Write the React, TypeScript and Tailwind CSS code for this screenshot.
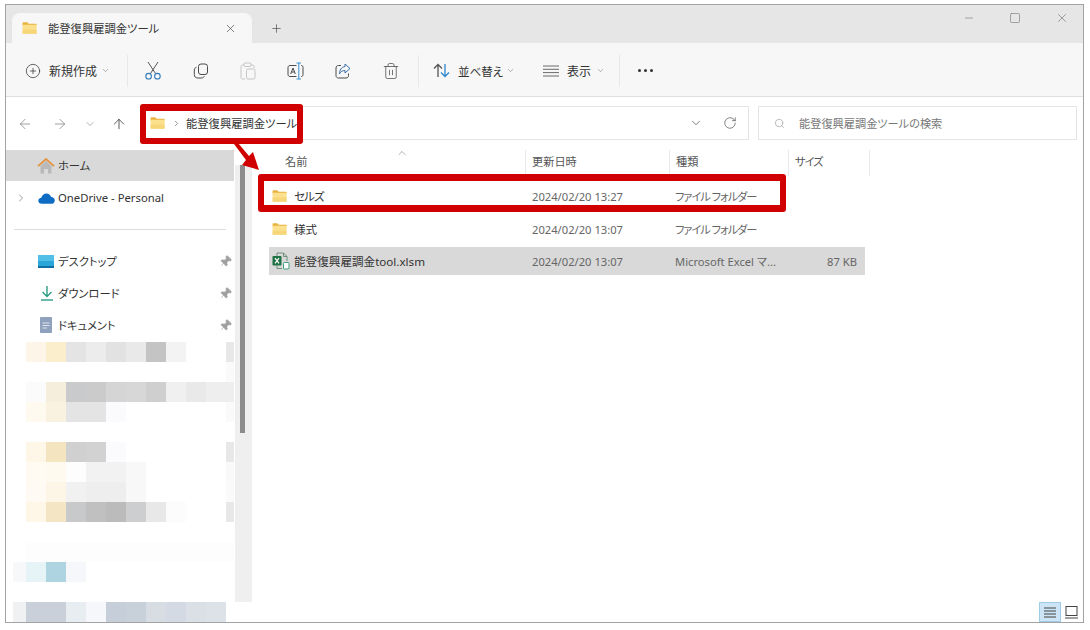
import React from "react";
import { ArrowLeft, ArrowRight, ArrowUp, ChevronDown, ChevronRight, ChevronUp, CirclePlus, Minus, Pin, Plus, RotateCw, Search, Square, Trash2, X } from "lucide-react";

function Folder({ className = "" }: { className?: string }) {
  return (
    <svg viewBox="0 0 16 13" className={className}>
      <path d="M0.5 1.2C0.5 0.6 1 0.2 1.5 0.2H5.5L7.2 1.8H15C15.4 1.8 15.7 2.1 15.7 2.5V4H0.5Z" fill="#e8b33f" />
      <rect x="0.5" y="3" width="15.2" height="9.6" rx="0.6" fill="#fbe08e" />
      <rect x="0.5" y="8" width="15.2" height="4.6" rx="0.6" fill="#f7d679" />
    </svg>
  );
}

function Excel({ className = "" }: { className?: string }) {
  return (
    <svg viewBox="0 0 18 18" className={className}>
      <path d="M5 1H11.5L15 4.5V9" fill="none" stroke="#6f8f7d" strokeWidth="1" />
      <path d="M11.5 1V4.5H15" fill="none" stroke="#6f8f7d" strokeWidth="1" />
      <path d="M5 1V4M5 14V16.5H10" fill="none" stroke="#6f8f7d" strokeWidth="1" />
      <rect x="0.5" y="4" width="9" height="9.5" rx="0.8" fill="#1e7145" />
      <path d="M3 6.2L7 11.4M7 6.2L3 11.4" stroke="#fff" strokeWidth="1.2" />
      <rect x="11.5" y="10.5" width="5.5" height="6.5" rx="1" fill="#fff" stroke="#3f9c7c" strokeWidth="1" />
    </svg>
  );
}

function HomeIcon() {
  return (
    <svg viewBox="0 0 18 16" className="w-[18px] h-4 shrink-0 -ml-px">
      <path d="M3.5 8V15.5H7V11H11V15.5H14.5V8L9 3Z" fill="#b9b9b9" />
      <path d="M1 8.2L9 1L17 8.2" fill="none" stroke="#e3913a" strokeWidth="1.7" />
    </svg>
  );
}

function Cloud() {
  return (
    <svg viewBox="0 0 17 11" className="w-[17px] h-[11px] shrink-0">
      <path d="M4 10.8C1.8 10.8 0.3 9.5 0.3 7.7C0.3 6 1.6 4.8 3.3 4.7C4 2.3 6 0.6 8.4 0.6C10.6 0.6 12.4 2 13.1 4C15.2 4 16.8 5.4 16.8 7.4C16.8 9.4 15.2 10.8 13.2 10.8Z" fill="#0f6cc4" />
    </svg>
  );
}

function DesktopIcon() {
  return (
    <svg viewBox="0 0 16 13" className="w-4 h-[13px] shrink-0">
      <rect width="16" height="13" fill="#2aa7d8" />
      <rect width="16" height="6" fill="#52c0e6" />
      <rect y="11" width="16" height="2" fill="#0f6ea3" />
    </svg>
  );
}

function DownloadIcon() {
  return (
    <svg viewBox="0 0 14 16" className="w-[14px] h-4 shrink-0 ml-0.5">
      <path d="M7 1V11M2.5 7L7 11.5L11.5 7" fill="none" stroke="#2f9c86" strokeWidth="1.4" />
      <path d="M1 15H13" stroke="#2f9c86" strokeWidth="1.4" />
    </svg>
  );
}

function DocIcon() {
  return (
    <svg viewBox="0 0 12 16" className="w-3 h-4 shrink-0 ml-0.5">
      <rect width="12" height="16" rx="0.8" fill="#8fa1bd" />
      <path d="M2.5 6H9.5M2.5 8.5H9.5M2.5 11H7" stroke="#e9edf3" strokeWidth="0.9" />
    </svg>
  );
}

function ToolDivider({ className = "" }: { className?: string }) {
  return <div className={`w-px h-8 bg-[#e8e8e8] shrink-0 ${className}`} />;
}

function ScissorsIcon() {
  return (
    <svg viewBox="0 0 16 19" className="w-4 h-[19px] shrink-0" fill="none">
      <path d="M3 1L10.5 12.5M13 1L5.5 12.5" stroke="#555" strokeWidth="1" />
      <circle cx="3.6" cy="15.2" r="2.8" stroke="#2f78b8" strokeWidth="1.1" />
      <circle cx="12.4" cy="15.2" r="2.8" stroke="#2f78b8" strokeWidth="1.1" />
    </svg>
  );
}

function CopyIcon() {
  return (
    <svg viewBox="0 0 16 16" className="w-4 h-4" fill="none" stroke="#4a4a4a" strokeWidth="1">
      <rect x="5.5" y="1" width="9" height="10.5" rx="2.5" />
      <path d="M3.5 4.2C2 4.8 1.3 5.7 1.3 7V11.5C1.3 13.6 2.6 15 4.7 15H8.5C9.8 15 10.8 14.3 11.3 13.2" />
    </svg>
  );
}

function PasteIcon() {
  return (
    <svg viewBox="0 0 16 18" className="w-4 h-[18px]" fill="none" stroke="#c5c5c5" strokeWidth="1">
      <path d="M4 3H2.5C1.6 3 1 3.6 1 4.5V15.5C1 16.4 1.6 17 2.5 17H5" />
      <path d="M11 3H12.5C13.4 3 14 3.6 14 4.5V6" />
      <rect x="4" y="1" width="7" height="3.5" rx="1" />
      <rect x="6.5" y="7" width="8.5" height="10" rx="1.5" />
    </svg>
  );
}

function RenameIcon() {
  return (
    <svg viewBox="0 0 17 18" className="w-[17px] h-[18px]" fill="none" stroke="#4a4a4a" strokeWidth="1">
      <path d="M9.5 3.5H3C1.8 3.5 1 4.3 1 5.5V12.5C1 13.7 1.8 14.5 3 14.5H9.5" />
      <path d="M14 3.5H14.5C15.5 3.5 16 4.3 16 5.5V12.5C16 13.7 15.5 14.5 14.5 14.5H14" />
      <path d="M9.5 1H14M9.5 17H14M11.8 1V17" stroke="#3a8fd0" />
      <path d="M3.7 12L6 6L8.3 12M4.6 10H7.4" />
    </svg>
  );
}

function ShareIcon() {
  return (
    <svg viewBox="0 0 16 16" className="w-4 h-4" fill="none" stroke="#4a4a4a" strokeWidth="1">
      <path d="M6 2.5H3.5C2 2.5 1 3.5 1 5V12.5C1 14 2 15 3.5 15H11C12.5 15 13.5 14 13.5 12.5V10.5" />
      <path d="M10 1L15 5.5L10 10V7.5C7.5 7.5 5.5 8.5 4.5 11C4.5 7 6.5 4 10 3.5Z" stroke="#3a6fa8" />
    </svg>
  );
}

function SortIcon() {
  return (
    <svg viewBox="0 0 17 15" className="w-[17px] h-[15px]" fill="none" strokeWidth="1.3">
      <path d="M5 14V1.5M1 5.5L5 1.5L9 5.5" stroke="#555" />
      <path d="M12 1V13.5M8 9.5L12 13.5L16 9.5" stroke="#2f86cc" />
    </svg>
  );
}

function ViewIcon() {
  return (
    <svg viewBox="0 0 16 12" className="w-4 h-3" stroke="#6a6a6a" strokeWidth="1">
      <path d="M0 1H16M0 4.3H16M0 7.6H16M0 11H16" />
    </svg>
  );
}

const _ = "";
const rows: string[][] = [
  [_, "bg-[#fdf6e8]", "bg-[#fbeecd]", "bg-[#e4e4e4]", "bg-[#ececec]", "bg-[#e2e2e2]", "bg-[#e9e9e9]", "bg-[#c4c4c4]", "bg-[#f3f3f3]", _, _, "bg-[#e8e8e8]"],
  [_, _, _, _, _, _, _, _, _, _, _, "bg-[#fafafa]"],
  [_, "bg-[#fbfbfb]", "bg-[#f6eedd]", "bg-[#c9cacc]", "bg-[#cbcbcb]", "bg-[#d5d5d5]", "bg-[#d7d7d7]", "bg-[#cfcfcf]", "bg-[#f0f0f0]", "bg-[#e9e9e9]", "bg-[#eeeeee]", "bg-[#eeeeee]"],
  [_, "bg-[#fffaf0]", "bg-[#f9f2e0]", "bg-[#e4e4e4]", "bg-[#e4e4e4]", "bg-[#fbfbfd]", _, _, _, _, _, "bg-[#fafafa]"],
  [_, _, _, _, _, _, _, _, _, _, _, _],
  [_, "bg-[#fef6e6]", "bg-[#f4e4bf]", "bg-[#d0d0d0]", "bg-[#d2d2d2]", "bg-[#fbfbfd]", _, _, _, _, _, "bg-[#e8e8e8]"],
  [_, "bg-[#fffbf3]", "bg-[#fffaef]", "bg-[#fdfdfd]", "bg-[#f2f2f2]", "bg-[#f2f2f2]", "bg-[#f8f8f8]", _, _, _, _, "bg-[#f9f9f9]"],
  [_, "bg-[#fffbf4]", "bg-[#fdf5e6]", "bg-[#f1f1f1]", "bg-[#eeeeee]", "bg-[#eeeeee]", "bg-[#f8f8f8]", _, _, _, _, "bg-[#fafafa]"],
  [_, "bg-[#fef7e8]", "bg-[#f4e6c4]", "bg-[#c8c9ca]", "bg-[#c0c0c0]", "bg-[#bbbbbb]", "bg-[#ccced0]", "bg-[#e8e8e8]", "bg-[#fcfcfc]", _, _, "bg-[#e8e8e8]"],
  [_, _, _, _, _, _, _, _, _, _, _, _],
  [_, "bg-[#fdfdfd]", "bg-[#fdfdfd]", "bg-[#fdfdfd]", "bg-[#fdfdfd]", "bg-[#fdfdfd]", "bg-[#fdfdfd]", "bg-[#fdfdfd]", "bg-[#fdfdfd]", "bg-[#fdfdfd]", "bg-[#fdfdfd]", "bg-[#fdfdfd]"],
  ["bg-[#f7f8fa]", "bg-[#e6f4f8]", "bg-[#aed4e2]", "bg-[#f5f7fa]", _, _, _, _, _, _, _, _],
  [_, _, _, _, _, _, _, _, _, _, _, _],
  ["bg-[#f0f1f3]", "bg-[#cad0da]", "bg-[#cad0da]", "bg-[#e8edf2]", "bg-[#f5f7fa]", "bg-[#c6ceda]", "bg-[#c8d0da]", "bg-[#d8dde4]", "bg-[#d3dae4]", "bg-[#dbe0e7]", "bg-[#dde2e8]", _],
];

function NavRow({ icon, label, pin, chevron, className = "", labelClass = "pt-[2px]" }: { icon: React.ReactNode; label: string; pin?: boolean; chevron?: boolean; className?: string; labelClass?: string }) {
  return (
    <div className={`flex items-center h-8 shrink-0 ${className}`}>
      <div className="w-[32px] pl-[9px] shrink-0">{chevron && <ChevronRight className="w-3 h-3 text-[#666]" strokeWidth={1.3} />}</div>
      <div className="w-5 shrink-0">{icon}</div>
      <span className={`text-[11.3px] text-[#333] whitespace-nowrap ${labelClass}`}>{label}</span>
      {pin && <Pin className="w-[13px] h-[13px] text-[#a0a0a0] fill-[#a0a0a0] rotate-45 ml-auto mr-[2px]" strokeWidth={1.2} />}
    </div>
  );
}

function FileRow({ icon, name, date, kind, size, selected, className = "", nameClass = "", kindClass = "" }: { icon: React.ReactNode; name: string; date: string; kind: string; size?: string; selected?: boolean; className?: string; nameClass?: string; kindClass?: string }) {
  return (
    <div className={`flex items-center h-7 w-[596px] ml-[17px] text-[11.2px] text-[#666] whitespace-nowrap ${selected ? "bg-[#d9d9d9]" : ""} ${className}`}>
      <div className="w-[25px] pl-[3px] shrink-0">{icon}</div>
      <div className={`w-[238px] shrink-0 text-[#333] text-[11.6px] pt-[2px] ${nameClass}`}>{name}</div>
      <div className="w-[143px] shrink-0 pt-[2px]">{date}</div>
      <div className={`w-[120px] shrink-0 pt-[2px] ${kindClass}`}>{kind}</div>
      <div className="w-[66px] pr-[4px] shrink-0 text-right pt-[2px]">{size}</div>
    </div>
  );
}

function HeaderCell({ label, className = "" }: { label: string; className?: string }) {
  return <div className={`h-full flex items-center pl-[6px] pb-[1px] border-r border-[#e8e8e8] text-[11.2px] text-[#555] shrink-0 ${className}`}>{label}</div>;
}

export default function App() {
  return (
    <div className="relative w-[1090px] h-[630px] bg-white pl-[5px] pt-1 overflow-hidden [font-family:'Noto_Sans','Noto_Sans_CJK_JP',sans-serif] [font-feature-settings:'palt']">
      <div className="w-[1079px] h-[619px] border border-[#a3a3a3] flex flex-col bg-white">
        {/* tab bar */}
        <div className="h-[38px] shrink-0 bg-[#e6e6e6] flex items-end pl-[6px] relative">
          <div className="w-[240px] h-[30px] bg-[#f7f7f7] rounded-t-lg flex items-center pl-[10px]">
            <Folder className="w-[15px] h-3 shrink-0" />
            <span className="ml-[11px] text-[11.3px] text-[#333] whitespace-nowrap pt-[2px]">能登復興雇調金ツール</span>
            <X className="w-[13px] h-[13px] ml-auto mr-[15px] text-[#444]" strokeWidth={1.2} />
          </div>
          <Plus className="w-[13px] h-[13px] ml-[18px] mb-2 text-[#444]" strokeWidth={1.2} />
          <div className="ml-auto self-start mt-[6px] flex items-center text-[#666]">
            <Minus className="w-3 h-3" strokeWidth={1.1} />
            <Square className="w-3 h-3 ml-[34px]" strokeWidth={1.1} />
            <X className="w-[14px] h-[14px] ml-[34px] mr-[14px]" strokeWidth={1} />
          </div>
        </div>
        {/* toolbar */}
        <div className="h-[54px] shrink-0 bg-[#f7f7f7] border-b border-[#e0e0e0] flex items-center pl-[19px] pt-[2px] text-[12px] text-[#333] whitespace-nowrap">
          <CirclePlus className="w-4 h-4 text-[#333] shrink-0" strokeWidth={1.1} />
          <span className="ml-2 w-[48px] pt-[2px]">新規作成</span>
          <ChevronDown className="w-[9px] h-[9px] ml-[4px] text-[#666]" strokeWidth={1.3} />
          <ToolDivider className="ml-[17px]" />
          <div className="ml-[17px]"><ScissorsIcon /></div>
          <div className="ml-[32px]"><CopyIcon /></div>
          <div className="ml-[31px]"><PasteIcon /></div>
          <div className="ml-[31px]"><RenameIcon /></div>
          <div className="ml-[31px]"><ShareIcon /></div>
          <Trash2 className="w-[18px] h-[18px] ml-[31px] text-[#4a4a4a]" strokeWidth={1} />
          <ToolDivider className="ml-[18px]" />
          <div className="ml-[14px]"><SortIcon /></div>
          <span className="ml-[8px] w-[43px] pt-[2px] text-[11.5px]">並べ替え</span>
          <ChevronDown className="w-[9px] h-[9px] ml-[5px] text-[#666]" strokeWidth={1.3} />
          <div className="ml-[28px]"><ViewIcon /></div>
          <span className="ml-[8px] w-[24px] pt-[2px]">表示</span>
          <ChevronDown className="w-[9px] h-[9px] ml-[5px] text-[#666]" strokeWidth={1.3} />
          <ToolDivider className="ml-[14px]" />
          <div className="ml-[18px] flex gap-[3px]">
            <span className="w-[3px] h-[3px] rounded-full bg-[#333]" />
            <span className="w-[3px] h-[3px] rounded-full bg-[#333]" />
            <span className="w-[3px] h-[3px] rounded-full bg-[#333]" />
          </div>
        </div>
        {/* address row */}
        <div className="h-[53px] shrink-0 flex items-start pt-[9px]">
          <div className="h-[34px] flex items-center shrink-0 pt-px">
            <ArrowLeft className="w-4 h-4 ml-[11px] text-[#888]" strokeWidth={1.2} />
            <ArrowRight className="w-4 h-4 ml-[19px] text-[#888]" strokeWidth={1.2} />
            <ChevronDown className="w-3 h-3 ml-[16px] text-[#888]" strokeWidth={1.3} />
            <ArrowUp className="w-4 h-4 ml-[15px] text-[#333]" strokeWidth={1.2} />
          </div>
          <div className="ml-[13px] w-[609px] h-[34px] border border-[#e5e5e5] flex items-center pl-[9px] shrink-0">
            <Folder className="w-[15px] h-3 shrink-0" />
            <ChevronRight className="w-[9px] h-[9px] ml-[7px] text-[#444]" strokeWidth={1.5} />
            <span className="ml-[5px] text-[11.3px] text-[#333] whitespace-nowrap pt-[2px]">能登復興雇調金ツール</span>
            <ChevronDown className="w-[14px] h-[14px] ml-auto mr-[20px] text-[#444]" strokeWidth={1.2} />
            <RotateCw className="w-[14px] h-[14px] mr-[11px] text-[#444]" strokeWidth={1.1} />
          </div>
          <div className="ml-[9px] w-[319px] h-[34px] border border-[#e5e5e5] flex items-center pl-[15px] shrink-0">
            <Search className="w-[11px] h-[11px] text-[#888]" strokeWidth={1.2} />
            <span className="ml-[14px] text-[11.2px] text-[#777] whitespace-nowrap pt-[2px]">能登復興雇調金ツールの検索</span>
          </div>
        </div>
        {/* main */}
        <div className="flex-1 flex min-h-0">
          <div className="w-[228px] shrink-0 flex flex-col">
            <div className="h-[31px] bg-[#d9d9d9] flex items-center shrink-0">
              <div className="w-[32px] shrink-0" />
              <div className="w-5 shrink-0"><HomeIcon /></div>
              <span className="text-[11.3px] text-[#333] pt-[2px]">ホーム</span>
            </div>
            <NavRow icon={<Cloud />} label="OneDrive - Personal" chevron className="mt-px" labelClass="" />
            <div className="h-px bg-[#dcdcdc] mx-2 mt-[15px] mb-[15px] shrink-0" />
            <NavRow icon={<DesktopIcon />} label="デスクトップ" pin />
            <NavRow icon={<DownloadIcon />} label="ダウンロード" pin />
            <NavRow icon={<DocIcon />} label="ドキュメント" pin />
            <div className="mt-px flex flex-col pl-[7px]">
              {rows.map((row, i) => (
                <div key={i} className="flex h-5">
                  {row.map((c, j) => (
                    <div key={j} className={`${j === 11 ? "w-2" : j === 0 ? "w-[13px]" : "w-5"} h-5 ${c}`} />
                  ))}
                </div>
              ))}
            </div>
          </div>
          <div className="w-[17px] shrink-0 ml-px flex flex-col">
            <div className="h-[15px] shrink-0" />
            <div className="h-[437px] bg-[#efefef] pl-[5px]">
              <div className="w-[5px] h-[268px] bg-[#8c8c8c]" />
            </div>
          </div>
          <div className="flex-1 min-w-0 flex flex-col">
            <div className="h-[26px] flex shrink-0 relative">
              <HeaderCell label="名前" className="w-[274px] pl-[33px]" />
              <HeaderCell label="更新日時" className="w-[144px]" />
              <HeaderCell label="種類" className="w-[119px]" />
              <HeaderCell label="サイズ" className="w-[81px] tracking-[-1px]" />
              <ChevronUp className="absolute left-[144px] -top-[3px] w-[12px] h-[12px] text-[#777]" strokeWidth={1.2} />
            </div>
            <div className="pt-[6px] flex-1 flex flex-col">
              <FileRow icon={<Folder className="w-[15px] h-3" />} name="セルズ" nameClass="tracking-[-1px]" date="2024/02/20 13:27" kind="ファイル フォルダー" kindClass="tracking-[-1px]" />
              <FileRow icon={<Folder className="w-[15px] h-3" />} name="様式" date="2024/02/20 13:07" kind="ファイル フォルダー" kindClass="tracking-[-1px]" className="mt-[5px]" />
              <FileRow icon={<Excel className="w-[18px] h-[18px]" />} name="能登復興雇調金tool.xlsm" date="2024/02/20 13:07" kind="Microsoft Excel マ..." size="87 KB" selected className="mt-1" />
            </div>
            <div className="h-5 shrink-0 flex items-center justify-end pr-[5px]">
              <div className="w-[22px] h-5 bg-[#cce4f5] border border-[#9ccbe8] flex items-center justify-center">
                <svg viewBox="0 0 12 11" className="w-3 h-[11px]" stroke="#444" strokeWidth="1.1"><path d="M0 1H12M0 4H12M0 7H12M0 10H12" /></svg>
              </div>
              <svg viewBox="0 0 13 13" className="w-[13px] h-[13px] ml-[4px]" fill="none" stroke="#444" strokeWidth="1"><rect x="1" y="0.5" width="11" height="9" /><path d="M0 12H13" /></svg>
            </div>
          </div>
        </div>
      </div>

      {/* red annotations */}
      <div className="absolute left-[140px] top-[104px] w-[163px] h-[40px] border-x-[6px] border-t-[7px] border-b-[6px] border-[#d00000] rounded-[3px]" />
      <div className="absolute left-[258px] top-[174px] w-[528px] h-[38px] border-x-[6px] border-y-[7px] border-[#d00000] rounded-[3px]" />
      <svg viewBox="0 0 30 34" className="absolute left-[232px] top-[142px] w-[30px] h-[34px]">
        <path d="M2 2L6 1L17 14L21 10L27 28L10 23L14 18Z" fill="#d00000" />
      </svg>
    </div>
  );
}
